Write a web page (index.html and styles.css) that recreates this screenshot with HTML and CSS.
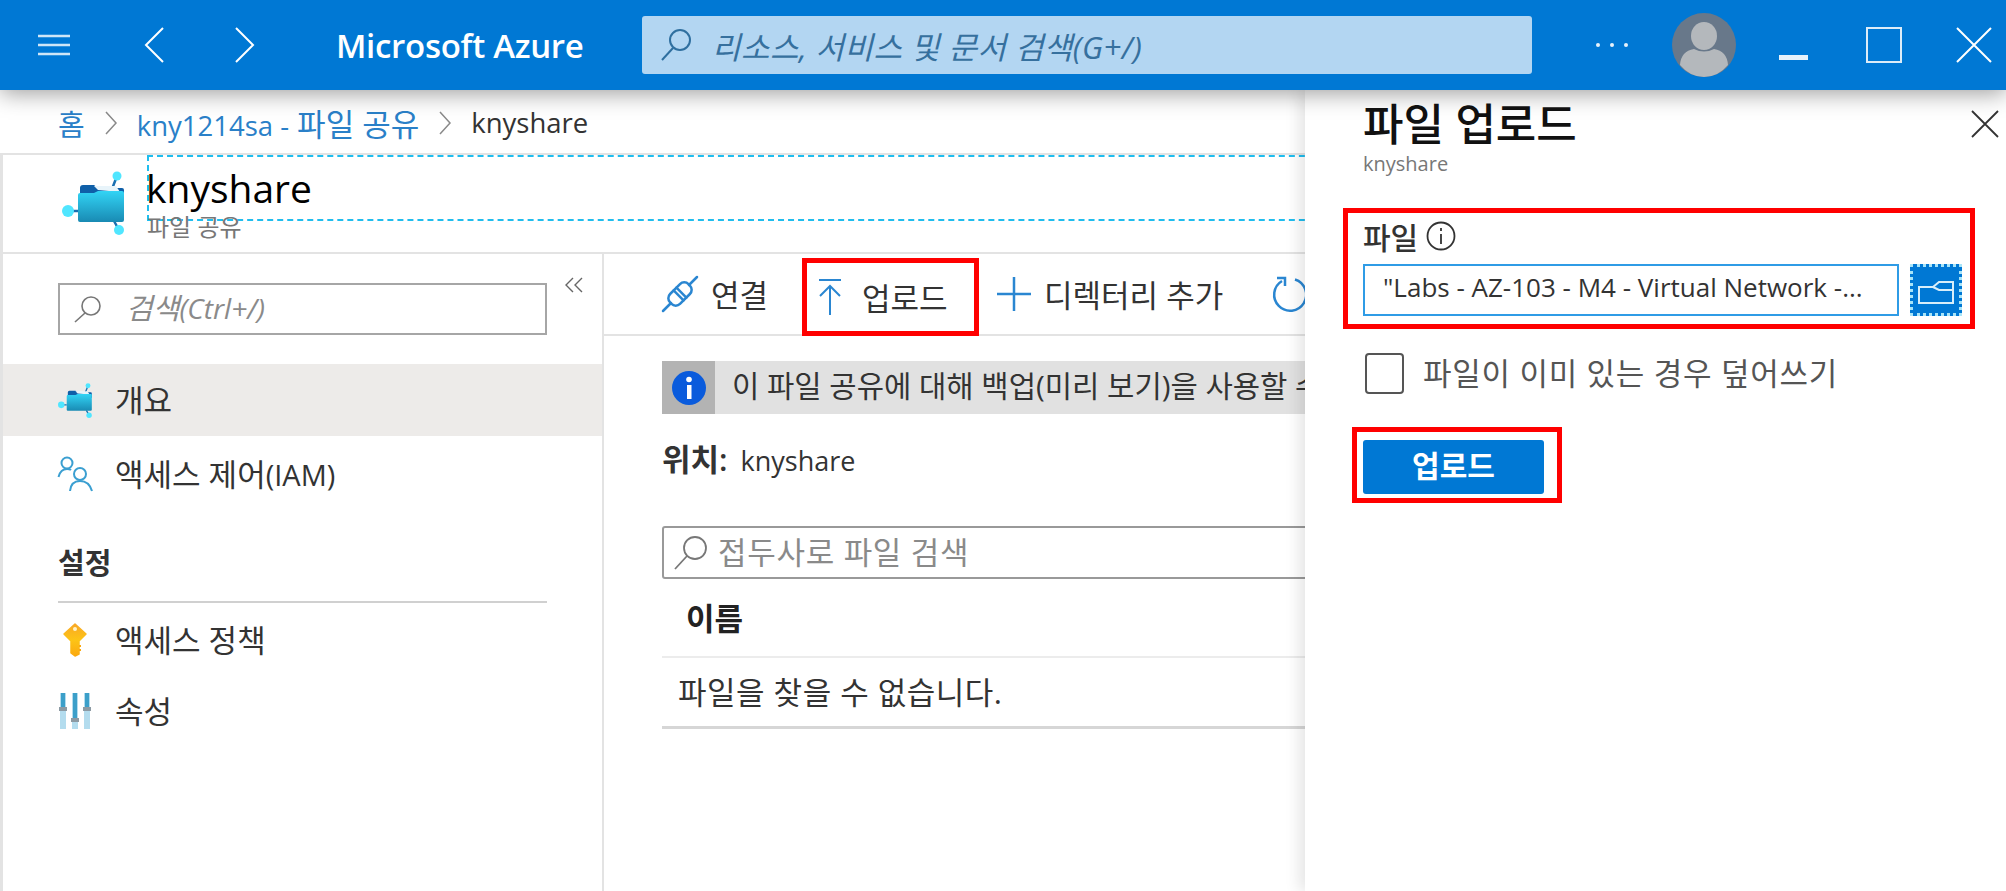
FILE: index.html
```html
<!DOCTYPE html>
<html lang="ko">
<head>
  <meta charset="UTF-8">
  <title>파일 업로드 - Microsoft Azure</title>
  <link rel="stylesheet" href="styles.css">
</head>
<body>
  <svg class="defs" width="0" height="0">
    <defs>
      <linearGradient id="folderFill" x1="0" y1="0" x2="0" y2="1">
        <stop offset="0" stop-color="#32d4f5"/>
        <stop offset="1" stop-color="#198ab3"/>
      </linearGradient>
      <linearGradient id="keyFill" x1="0" y1="0" x2="0" y2="1">
        <stop offset="0" stop-color="#f9a825"/>
        <stop offset="0.5" stop-color="#fdc416"/>
        <stop offset="1" stop-color="#fba90f"/>
      </linearGradient>
      <symbol id="shareIcon" viewBox="0 0 66 64">
        <path d="M50 18L55 5M52 50L57 59M16 40H6" stroke="#1a6fb0" stroke-width="2.5" fill="none"/>
        <path d="M18 17q0-3 3-3h11l4 3h24q2 0 2 2v8H18z" fill="#0f5fa8"/>
        <path d="M32 15l22 0 4 6-22-2z" fill="#e8f4fa"/>
        <path d="M16 24q0-2 2-2h14l4-2h24q2 0 2 2v27q0 2-2 2H18q-2 0-2-2z" fill="url(#folderFill)"/>
        <circle cx="55" cy="5" r="4.5" fill="#50e6ff"/>
        <circle cx="6" cy="40" r="6" fill="#50e6ff"/>
        <circle cx="57" cy="59" r="5" fill="#50e6ff"/>
      </symbol>
    </defs>
  </svg>

  <header class="topbar">
    <svg class="tb-menu" width="32" height="22" viewBox="0 0 32 22"><path d="M0 2H32M0 11H32M0 20H32" stroke="#cfe6f7" stroke-width="2.5"/></svg>
    <svg class="tb-back" width="20" height="36" viewBox="0 0 20 36"><path d="M19 1L2 18L19 35" stroke="#fff" stroke-width="2" fill="none"/></svg>
    <svg class="tb-forward" width="20" height="36" viewBox="0 0 20 36"><path d="M1 1L18 18L1 35" stroke="#fff" stroke-width="2" fill="none"/></svg>
    <div class="brand">Microsoft Azure</div>
    <div class="global-search">
      <svg width="32" height="34" viewBox="0 0 32 34"><circle cx="20" cy="12" r="10" stroke="#2f6f9f" stroke-width="2" fill="none"/><path d="M13 20L2 32" stroke="#2f6f9f" stroke-width="2"/></svg>
      <span>리소스, 서비스 및 문서 검색(G+/)</span>
    </div>
    <div class="tb-dots"><i></i><i></i><i></i></div>
    <svg class="tb-avatar" width="64" height="64" viewBox="0 0 64 64">
      <circle cx="32" cy="32" r="32" fill="#68788a"/>
      <ellipse cx="32" cy="23" rx="13" ry="14" fill="#b4b8bc"/>
      <path d="M8 52q1-14 14-16q10 5 20 0q13 2 14 16q-10 12-24 12t-24-12z" fill="#b4b8bc"/>
    </svg>
    <div class="tb-min"></div>
    <div class="tb-max"></div>
    <svg class="tb-close" width="36" height="36" viewBox="0 0 36 36"><path d="M1 1L35 35M35 1L1 35" stroke="#fff" stroke-width="2"/></svg>
  </header>

  <nav class="breadcrumb">
    <a class="home">홈</a>
    <svg width="12" height="24" viewBox="0 0 12 24"><path d="M1 1L11 12L1 23" stroke="#8a8a8a" stroke-width="1.5" fill="none"/></svg>
    <a><span class="lat">kny1214sa -</span> 파일 공유</a>
    <svg width="12" height="24" viewBox="0 0 12 24"><path d="M1 1L11 12L1 23" stroke="#8a8a8a" stroke-width="1.5" fill="none"/></svg>
    <span class="lat">knyshare</span>
  </nav>

  <section class="blade-head">
    <svg class="blade-icon" width="66" height="64"><use href="#shareIcon"/></svg>
    <div class="blade-title">
      <h1>knyshare</h1>
      <p>파일 공유</p>
    </div>
  </section>

  <div class="blade-body">
    <aside class="sidebar">
      <div class="side-top">
        <div class="side-search">
          <svg width="28" height="28" viewBox="0 0 28 28"><circle cx="17" cy="11" r="9" stroke="#777" stroke-width="1.6" fill="none"/><path d="M11 18L1 27" stroke="#777" stroke-width="1.6"/></svg>
          <span>검색<span class="lat">(Ctrl+/)</span></span>
        </div>
        <svg class="collapse" width="18" height="16" viewBox="0 0 18 16"><path d="M8 1L1 8L8 15M17 1L10 8L17 15" stroke="#666" stroke-width="1.4" fill="none"/></svg>
      </div>

      <a class="side-item active">
        <svg width="36" height="35"><use href="#shareIcon"/></svg>
        <span>개요</span>
      </a>
      <a class="side-item iam">
        <svg width="36" height="36" viewBox="0 0 36 36" fill="none" stroke="#3b9fd1" stroke-width="2">
          <circle cx="9" cy="7" r="5.5"/><path d="M0.5 21q2-8 8.500-8q3 0 4 1"/>
          <circle cx="22" cy="18" r="6"/><path d="M12 35q1-10 10-10t12 10"/>
        </svg>
        <span>액세스 제어<span class="lat">(IAM)</span></span>
      </a>

      <h2 class="side-heading">설정</h2>

      <a class="side-item">
        <svg class="key" width="24" height="34" viewBox="0 0 24 34">
          <path d="M12 1L23 11L16 18V31L12 33L8 30V18L1 11z" fill="url(#keyFill)" stroke="url(#keyFill)" stroke-width="1.500" stroke-linejoin="round"/>
          <circle cx="12" cy="6" r="2" fill="#fff3c8"/>
          <path d="M16 23h2M16 27h2" stroke="#fba90f" stroke-width="2"/>
        </svg>
        <span>액세스 정책</span>
      </a>
      <a class="side-item props">
        <svg width="30" height="36" viewBox="0 0 30 36">
          <path d="M0 0h6v36H0zM12 0h6v36h-6zM24 0h6v36h-6z" fill="#b3dcee"/>
          <path d="M1 0h4v14H1zM13 0h4v25h-4zM25 0h4v14h-4z" fill="#3c9fc9"/>
          <path d="M-1 14h8v4H-1zM11 25h8v4h-8zM23 14h8v4h-8z" fill="#8c9aa3"/>
        </svg>
        <span>속성</span>
      </a>
    </aside>

    <main class="content">
      <div class="toolbar">
        <button class="tool connect">
          <svg width="36" height="36" viewBox="0 0 36 36" fill="none" stroke="#2a86d1" stroke-width="2.500" stroke-linecap="round">
            <path d="M1 35L9 27M27 9L35 1"/>
            <g transform="rotate(45 18 18)"><rect x="11" y="5" width="14" height="26" rx="6"/><path d="M11 16H25M11 20H25"/></g>
          </svg>
          <span>연결</span>
        </button>
        <button class="tool upload">
          <svg width="22" height="36" viewBox="0 0 22 36" fill="none" stroke="#2a86d1" stroke-width="2">
            <path d="M0 1H22M11 36V8M1 17L11 7L21 17"/>
          </svg>
          <span>업로드</span>
        </button>
        <button class="tool add">
          <svg width="34" height="34" viewBox="0 0 34 34"><path d="M17 0V34M0 17H34" stroke="#2a86d1" stroke-width="2.500"/></svg>
          <span>디렉터리 추가</span>
        </button>
        <svg class="refresh" width="36" height="36" viewBox="0 0 36 36" fill="none" stroke="#2a86d1" stroke-width="2.500">
          <path d="M24 3.500A16 16 0 1 1 11 5"/><path d="M6 2H14V10"/>
        </svg>
      </div>

      <div class="notice">
        <div class="notice-icon">
          <svg width="34" height="34" viewBox="0 0 34 34"><circle cx="17" cy="17" r="17" fill="#0a5bdc"/><rect x="15" y="14" width="4.500" height="14" fill="#fff"/><circle cx="17" cy="8.500" r="2.800" fill="#fff"/></svg>
        </div>
        <span>이 파일 공유에 대해 백업(미리 보기)을 사용할 수 있습니다. 자세히 알아보려면 클릭하세요.</span>
      </div>

      <p class="location"><b>위치:</b><span class="lat">knyshare</span></p>

      <div class="file-search">
        <svg width="34" height="34" viewBox="0 0 34 34"><circle cx="21" cy="12" r="11" stroke="#777" stroke-width="1.800" fill="none"/><path d="M13 20L1 33" stroke="#777" stroke-width="1.800"/></svg>
        <span>접두사로 파일 검색</span>
      </div>

      <div class="list-head">이름</div>
      <div class="list-empty">파일을 찾을 수 없습니다.</div>
    </main>
  </div>

  <aside class="panel">
    <svg class="panel-close" width="28" height="28" viewBox="0 0 28 28"><path d="M1 1L27 27M27 1L1 27" stroke="#333" stroke-width="1.800"/></svg>
    <h2 class="panel-title">파일 업로드</h2>
    <p class="panel-sub">knyshare</p>

    <div class="field-box">
      <div class="field-label">
        파일
        <svg width="30" height="30" viewBox="0 0 30 30"><circle cx="15" cy="15" r="13.500" stroke="#333" stroke-width="1.800" fill="none"/><path d="M15 13V23M15 7V10" stroke="#333" stroke-width="1.800"/></svg>
      </div>
      <div class="field-row">
        <div class="file-input">"Labs - AZ-103 - M4 - Virtual Network -...</div>
        <button class="browse">
          <svg width="36" height="24" viewBox="0 0 36 24" fill="none" stroke="#d8eefa" stroke-width="2"><path d="M1 7H15L21 2H35V23H1z"/><path d="M15 7L21 10H35"/></svg>
        </button>
      </div>
    </div>

    <label class="overwrite">
      <span class="checkbox"></span>
      <span>파일이 이미 있는 경우 덮어쓰기</span>
    </label>

    <div class="submit-box">
      <button class="submit">업로드</button>
    </div>
  </aside>
</body>
</html>
```
FILE: styles.css
```css
* {
  box-sizing: border-box;
}

html, body {
  height: 891px;
}

body {
  margin: 0;
  overflow: hidden;
  position: relative;
  background: #fff;
  color: #333;
  font-family: "Open Sans", "Noto Sans CJK KR", sans-serif;
  font-size: 31px;
}

/* latin runs are set smaller than the hangul around them */
.lat {
  font-size: 27px;
}

.defs {
  position: absolute;
}

svg {
  display: block;
  flex: none;
  overflow: visible;
}

button {
  font: inherit;
  color: inherit;
  background: none;
  border: none;
  padding: 0;
}

h1, h2, p {
  margin: 0;
  font-weight: normal;
}

/* top bar */
.topbar {
  position: relative;
  z-index: 5;
  display: flex;
  align-items: center;
  height: 90px;
  background: #0078d4;
  box-shadow: 0 3px 22px rgba(0, 0, 0, 0.4);
}

.tb-menu { margin-left: 38px; }
.tb-back { margin-left: 74px; }
.tb-forward { margin-left: 71px; }

.brand {
  margin-left: 81px;
  width: 306px;
  color: #fff;
  font-size: 33px;
  font-weight: 600;
  letter-spacing: -0.3px;
}

.global-search {
  display: flex;
  align-items: center;
  width: 890px;
  height: 58px;
  background: #b3d6f2;
  border-radius: 3px;
  padding-left: 18px;
  color: #36709e;
  font-style: italic;
}

.global-search > span {
  margin-left: 20px;
  letter-spacing: 0.45px;
}

.tb-dots {
  display: flex;
  gap: 10px;
  margin-left: 64px;
}

.tb-dots i {
  width: 4px;
  height: 4px;
  background: #e6f2fb;
  border-radius: 50%;
}

.tb-avatar { margin-left: 44px; }

.tb-min {
  width: 29px;
  height: 5px;
  margin: 24px 0 0 43px;
  background: #e6f2fb;
}

.tb-max {
  width: 36px;
  height: 36px;
  margin-left: 58px;
  border: 2px solid #dcecf8;
}

.tb-close { margin-left: 54px; }

/* breadcrumb */
.breadcrumb {
  display: flex;
  align-items: center;
  gap: 20px;
  height: 63px;
  padding: 2px 0 0 58px;
  color: #333;
}

.breadcrumb a {
  color: #2a80c8;
}

.breadcrumb .home {
  font-size: 29px;
}

.breadcrumb .lat {
  font-size: 27.5px;
}

/* resource header */
.blade-head {
  display: flex;
  height: 101px;
  border-top: 2px solid #e3e3e3;
  border-bottom: 2px solid #e3e3e3;
  border-left: 3px solid #e3e3e3;
}

.blade-icon {
  margin: 16px 0 0 59px;
}

.blade-title {
  flex: 1;
  margin-left: 19px;
}

.blade-title h1 {
  height: 66px;
  border: 2px dashed #20bdee;
  color: #000;
  font-size: 39px;
  font-weight: 500;
  line-height: 62px;
  text-indent: -3px;
}

.blade-title p {
  margin-top: -8px;
  color: #777;
  font-size: 24px;
  line-height: 28px;
}

.blade-body {
  display: flex;
  height: 637px;
}

/* left menu */
.sidebar {
  width: 604px;
  border-left: 3px solid #e3e3e3;
  border-right: 2px solid #e3e3e3;
}

.side-top {
  display: flex;
  padding: 29px 0 0 55px;
  height: 110px;
}

.side-search {
  display: flex;
  align-items: center;
  width: 489px;
  height: 52px;
  border: 2px solid #a6a6a6;
  padding-left: 14px;
  color: #8a8a8a;
  font-style: italic;
}

.side-search > span {
  margin-left: 24px;
  padding-bottom: 6px;
  font-size: 29px;
}

.side-search .lat {
  font-size: 28px;
}

.collapse {
  margin: -6px 0 0 18px;
}

.side-item {
  display: flex;
  align-items: center;
  height: 72px;
  padding-left: 55px;
}

.side-item > span {
  margin-left: 21px;
  padding-bottom: 4px;
}

.side-item .lat {
  font-size: 29px;
}

.side-item.active {
  background: #edebe9;
}

.side-item.iam {
  margin-top: 2px;
}

.side-item .key {
  margin-left: 5px;
}

.side-item .key + span {
  margin-left: 28px;
}

.side-item.props {
  margin-top: -1px;
}

.side-item.props svg {
  margin-left: 2px;
}

.side-item.props span {
  margin-left: 25px;
}

.side-heading {
  margin: 39px 0 1px 55px;
  width: 489px;
  height: 54px;
  border-bottom: 2px solid #d0d0d0;
  color: #333;
  font-size: 29px;
  font-weight: 600;
  line-height: 28px;
}

/* main column */
.content {
  flex: 1;
  min-width: 0;
  padding-left: 58px;
  overflow: hidden;
}

.toolbar {
  display: flex;
  align-items: center;
  height: 82px;
  margin-left: -58px;
  padding-left: 58px;
  border-bottom: 2px solid #e3e3e3;
}

.tool {
  display: flex;
  align-items: center;
  white-space: nowrap;
}

.tool span {
  margin-left: 13px;
  padding-bottom: 2px;
}

.tool.upload {
  height: 78px;
  width: 177px;
  margin: 6px 0 0 34px;
  padding-left: 12px;
  border: 5px solid #f00;
}

.tool.upload span {
  margin-left: 21px;
}

.tool.add {
  margin-left: 18px;
}

.refresh {
  margin-left: 48px;
}

.notice {
  display: flex;
  align-items: center;
  height: 53px;
  margin-top: 25px;
  background: #e1e1e1;
  font-size: 29.7px;
  white-space: nowrap;
}

.notice-icon {
  display: flex;
  align-items: center;
  justify-content: center;
  width: 53px;
  height: 53px;
  background: #b3b3b3;
}

.notice span {
  margin-left: 17px;
  padding-bottom: 6px;
}

.location {
  margin-top: 25px;
  line-height: 40px;
}

.location b {
  font-weight: 600;
  margin-right: 13px;
}

.file-search {
  display: flex;
  align-items: center;
  height: 53px;
  margin-top: 45px;
  border: 2px solid #999;
  border-radius: 3px;
  padding-left: 10px;
  color: #8a8a8a;
}

.file-search span {
  margin-left: 10px;
  padding-bottom: 5px;
  letter-spacing: 0.7px;
}

.list-head {
  height: 79px;
  padding-left: 24px;
  border-bottom: 2px solid #ececec;
  color: #222;
  font-weight: 600;
  line-height: 79px;
}

.list-empty {
  height: 71px;
  padding-left: 16px;
  border-bottom: 3px solid #d6d6d6;
  letter-spacing: 0.5px;
  line-height: 69px;
}

/* upload panel */
.panel {
  position: absolute;
  z-index: 3;
  top: 90px;
  left: 1305px;
  right: 0;
  bottom: 0;
  padding: 0 0 0 58px;
  background: #fff;
  box-shadow: -6px 0 14px rgba(0, 0, 0, 0.1);
}

.panel-close {
  position: absolute;
  top: 20px;
  right: 7px;
}

.panel-title {
  padding-top: 9px;
  color: #111;
  font-size: 44px;
  font-weight: 500;
  line-height: 50px;
}

.panel-sub {
  margin-top: 1px;
  color: #777;
  font-size: 20px;
  line-height: 28px;
}

.field-box {
  width: 632px;
  height: 121px;
  margin: 30px 0 0 -20px;
  padding: 0 8px 0 15px;
  border: 5px solid #f00;
}

.field-label {
  display: flex;
  align-items: center;
  gap: 8px;
  height: 45px;
  font-size: 30px;
  font-weight: 500;
}

.field-row {
  display: flex;
  gap: 11px;
  margin-top: 6px;
}

.file-input {
  width: 536px;
  height: 52px;
  border: 2px solid #2f9ce6;
  padding-left: 18px;
  font-size: 26px;
  line-height: 43px;
  white-space: nowrap;
  overflow: hidden;
}

.browse {
  display: flex;
  align-items: center;
  justify-content: center;
  width: 52px;
  height: 52px;
  padding-top: 4px;
  background: #0078d4;
  border: 3px dotted #a8e4f8;
}

.overwrite {
  display: flex;
  align-items: center;
  height: 41px;
  margin: 24px 0 0 2px;
  color: #555;
  letter-spacing: 0.7px;
}

.overwrite > span:last-child {
  padding-bottom: 4px;
}

.checkbox {
  width: 39px;
  height: 41px;
  border: 2px solid #555;
  border-radius: 4px;
  margin-right: 19px;
}

.submit-box {
  width: 210px;
  height: 76px;
  margin: 33px 0 0 -11px;
  padding: 8px 0 0 6px;
  border: 5px solid #f00;
}

.submit {
  display: block;
  width: 181px;
  height: 54px;
  padding-bottom: 6px;
  background: #0078d4;
  border-radius: 3px;
  color: #fff;
  font-size: 30px;
  font-weight: 600;
}
```
